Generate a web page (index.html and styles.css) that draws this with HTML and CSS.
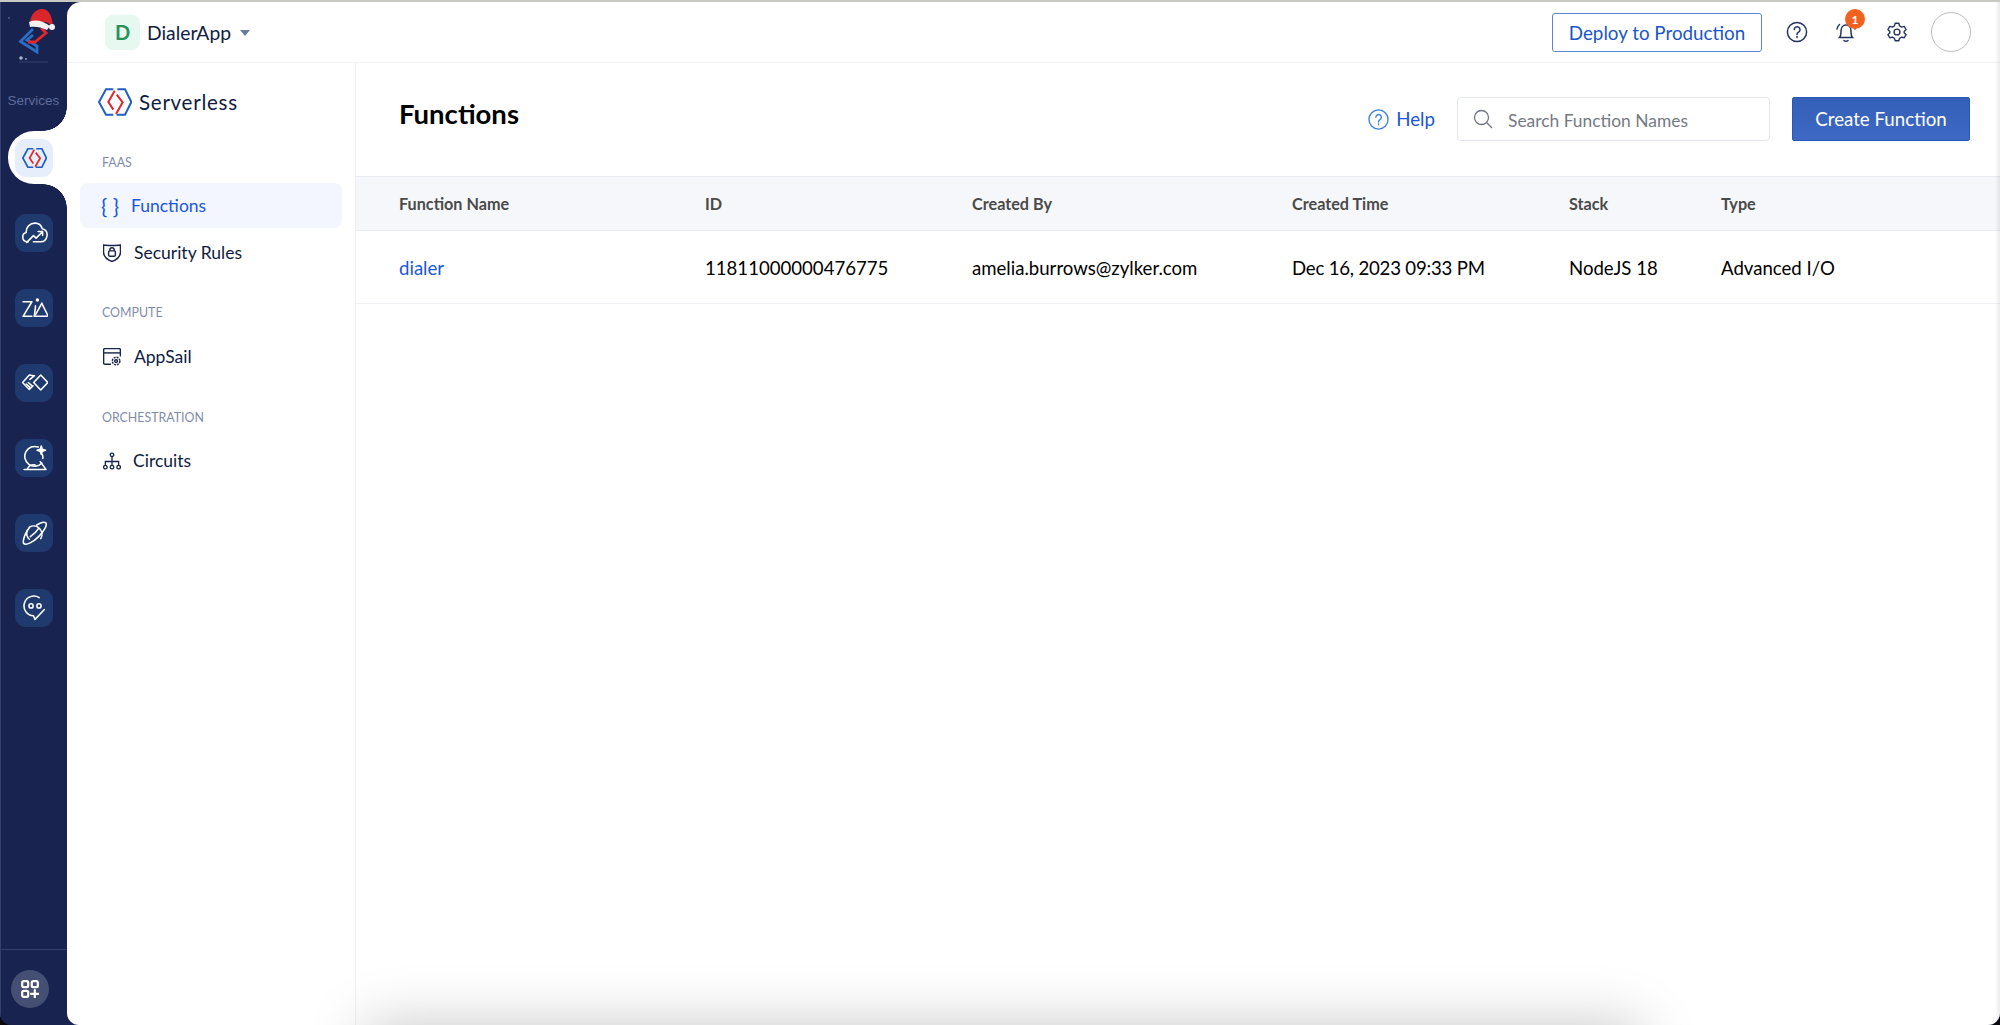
FILE: index.html
```html
<!DOCTYPE html>
<html lang="en">
<head>
<meta charset="utf-8">
<title>Functions - Serverless</title>
<link rel="stylesheet" href="styles.css">
</head>
<body>
<div class="shell">
  <nav class="rail">
    <svg class="rail-logo" viewBox="0 0 67 68" aria-hidden="true">
      <circle cx="9" cy="16" r=".7" fill="#8f9ac0"/>
      <path d="M33 27 L20.500 39.500 L37 50 V44 L27 38 L33 33" fill="none" stroke="#2a6fc4" stroke-width="2.800"/>
      <path d="M41 26 L46 31 L35 40 H28" fill="none" stroke="#e8262a" stroke-width="2.800"/>
      <path d="M30 20 C31 12 36 7 42 7 C49 7 52 14 53 24 L46 20 L31 22 Z" fill="#d9262b"/>
      <path d="M29 20 C36 17 43 19 50 24 L47 28 C41 25 35 24 30 25 Z" fill="#f4f1ee"/>
      <circle cx="52" cy="25" r="3" fill="#f4f1ee"/>
      <circle cx="21" cy="56" r="1.800" fill="#aab3cf"/>
      <circle cx="26" cy="57" r="1" fill="#8f9ac0"/>
      <path d="M19 60 H48" stroke="#34406c"/>
    </svg>
    <div class="rail-label">Services</div>
    <div class="rail-tab">
      <span class="tile tile-active">
        <svg class="ic-tile" viewBox="0 0 102 82" aria-hidden="true">
          <path d="M46 3 H24 L3 41 L24 79 H46 M58 3 H81 L100 41 81 79 H56" fill="none" stroke="#1f5fc0" stroke-width="7"/>
          <path d="M50 7 L31 41 L46 64 M56 19 L74 42 L54 77" fill="none" stroke="#e3262c" stroke-width="7"/>
        </svg>
      </span>
    </div>
    <div class="rail-list">
      <span class="tile"><svg class="ic-white" viewBox="0 0 26 26" aria-hidden="true"><path d="M7 21 H6 A4.600 4.600 0 0 1 5 12 C4.600 7 8.500 3 13.500 3 C17 3 19.500 5 20.500 8.500 C24 9.500 25.500 12.500 25 15.500 C24.500 18.500 22.500 21 19 21 H12"/><path d="M5.500 21.500 L12 15 L14.500 17.500 L20.500 11.500 M16.500 11 H20.800 V15"/></svg></span>
      <span class="tile"><svg class="ic-white" viewBox="0 0 26 26" aria-hidden="true"><path d="M2 6.500 H10.500 L2 20.500 H10.500"/><path d="M14 10.500 L12.800 20.500"/><circle cx="15.800" cy="4.800" r=".9"/><path d="M20 8 L25.500 19 C25.800 20 25.300 20.500 24.300 20.500 H13"/><path d="M20 8 L14 19"/></svg></span>
      <span class="tile"><svg class="ic-white" viewBox="0 0 26 26" aria-hidden="true"><path d="M19 4.800 L25.800 12 L19 19.200 L12.200 12 Z"/><path d="M12 5.500 L8 4.800 L1.500 12 L8 18.800 L11.500 15.300 M8.500 9 L13 5.500"/><path d="M5 13.500 L9 17 M7 12 L11 15.500"/></svg></span>
      <span class="tile"><svg class="ic-white" viewBox="0 0 26 26" aria-hidden="true"><path d="M16.500 2 A9.500 9.500 0 1 0 20 17.500 M20.500 9 A8.500 8.500 0 0 1 21 13"/><path d="M3 23.500 H24 L18.500 16 M6 23.500 C7 20.500 10 18.800 13.500 19"/><path d="M19.500 1 L20.500 4 L23.500 5 L20.500 6 L19.500 9 L18.500 6 L15.500 5 L18.500 4 Z" fill="#fff"/></svg></span>
      <span class="tile"><svg class="ic-white" viewBox="0 0 26 26" aria-hidden="true"><path d="M8 7 A8 8 0 0 1 19 18 M6 10 A8 8 0 0 0 8 18.500"/><path d="M8 7.500 C3.500 13 1.500 20 2.500 22.500 C5 25 12 21 17 16 C22 11 25.500 5 24 2.800 C22 1.500 18 3 15 5"/><path d="M9 16 C12 14 15 11 17 8"/></svg></span>
      <span class="tile"><svg class="ic-white" viewBox="0 0 26 26" aria-hidden="true"><path d="M17.500 2.500 A9.500 9.500 0 1 0 12 20 L13.500 23.500 L22.500 14"/><circle cx="9.700" cy="10.500" r="2"/><circle cx="17.300" cy="10.500" r="2"/></svg></span>
    </div>
    <div class="rail-foot">
      <span class="rail-add">
        <svg viewBox="0 0 18 18" aria-hidden="true"><rect x="1.200" y="1.200" width="6" height="6" rx="1.400"/><rect x="10.800" y="1.200" width="6" height="6" rx="1.400"/><rect x="1.200" y="10.800" width="6" height="6" rx="1.400"/><path d="M13.800 10 V17.600 M10 13.800 H17.600"/></svg>
      </span>
    </div>
  </nav>

  <div class="main">
    <header class="topbar">
      <span class="app-badge">D</span>
      <span class="app-name">DialerApp</span>
      <span class="caret"></span>
      <div class="topbar-right">
        <span class="btn-deploy">Deploy to Production</span>
        <svg class="ic-top ic-help" viewBox="0 0 22 22" aria-hidden="true"><circle cx="11" cy="11" r="9.600"/><path d="M8.200 8.600 A2.900 2.900 0 1 1 12.600 11.200 C11.600 11.800 11 12.400 11 13.600"/><path d="M11 15.600 V16.600"/></svg>
        <span class="bell">
          <svg class="ic-top" viewBox="0 0 22 24" aria-hidden="true"><path d="M4.500 17.500 C6 16 6 14 6 11 C6 7.500 8 5 11 5 C14 5 16 7.500 16 11 C16 14 16 16 17.500 17.500 Z"/><path d="M9 20.500 C10 21.500 12 21.500 13 20.500"/><path d="M2 9 C2.300 7 3.200 5.500 4.500 4.500 M20 9 C19.700 7 18.800 5.500 17.500 4.500"/></svg>
          <span class="badge">1</span>
        </span>
        <svg class="ic-top ic-gear" viewBox="0 0 24 24" aria-hidden="true"><path d="M10 2.500 H14 L14.800 5.300 L17 6.600 L19.900 5.900 L21.900 9.300 L19.800 11.400 V12.800 L21.900 14.900 L19.900 18.300 L17 17.600 L14.800 18.900 L14 21.500 H10 L9.200 18.900 L7 17.600 L4.100 18.300 L2.100 14.900 L4.200 12.800 V11.400 L2.100 9.300 L4.100 5.900 L7 6.600 L9.200 5.300 Z" stroke-linejoin="round"/><circle cx="12" cy="12" r="3.200"/></svg>
        <span class="avatar"></span>
      </div>
    </header>

    <div class="body">
      <aside class="sidebar">
        <div class="brand">
          <svg class="brand-logo" viewBox="0 0 102 82" aria-hidden="true">
            <path d="M46 3 H24 L3 41 L24 79 H46 M58 3 H81 L100 41 81 79 H56" fill="none" stroke="#1f5fc0" stroke-width="6"/>
            <path d="M50 7 L31 41 L46 64 M56 19 L74 42 L54 77" fill="none" stroke="#e3262c" stroke-width="6"/>
          </svg>
          <span class="brand-name">Serverless</span>
        </div>
        <div class="section-label label-faas">FAAS</div>
        <a class="nav-item is-active"><span class="braces">{ }</span><span>Functions</span></a>
        <a class="nav-item nav-security">
          <svg class="ic-nav" viewBox="1.500 2 17 17" aria-hidden="true"><path d="M2 3 C5 3.600 15 3.600 18 3 V9.500 C18 14 14 17 10 18.500 C6 17 2 14 2 9.500 Z"/><rect x="6.800" y="8.500" width="6.400" height="5" rx="1"/><path d="M8 8.500 V7.500 A2 2 0 0 1 12 7.500 V8.500"/></svg>
          <span>Security Rules</span>
        </a>
        <div class="section-label label-compute">COMPUTE</div>
        <a class="nav-item nav-compute">
          <svg class="ic-nav" viewBox="1.200 1.700 17.600 17.600" aria-hidden="true"><path d="M9 17.500 H3 A1.200 1.200 0 0 1 1.800 16.300 V3.500 A1.200 1.200 0 0 1 3 2.300 H17 A1.200 1.200 0 0 1 18.200 3.500 V10"/><path d="M1.800 6.500 H18.200"/><circle cx="14" cy="14.500" r="1.400"/><circle cx="14" cy="14.500" r="3.700" stroke-dasharray="2 .9"/></svg>
          <span>AppSail</span>
        </a>
        <div class="section-label label-orch">ORCHESTRATION</div>
        <a class="nav-item nav-circuits">
          <svg class="ic-nav" viewBox="0.500 1 19 18" aria-hidden="true"><circle cx="10" cy="3.500" r="1.900"/><circle cx="3" cy="16.500" r="1.900"/><circle cx="10" cy="16.500" r="1.900"/><circle cx="17" cy="16.500" r="1.900"/><path d="M10 5.400 V14.600 M3 14.600 V10.500 H17 V14.600"/></svg>
          <span>Circuits</span>
        </a>
      </aside>

      <section class="content">
        <div class="content-head">
          <h1 class="title">Functions</h1>
          <div class="actions">
            <a class="help">
              <svg viewBox="0 0 22 22" aria-hidden="true"><circle cx="11" cy="11" r="10"/><path d="M8.200 8.600 A2.900 2.900 0 1 1 12.600 11.200 C11.600 11.800 11 12.400 11 13.600"/><path d="M11 15.600 V16.600"/></svg>
              <span>Help</span>
            </a>
            <div class="search">
              <svg viewBox="0 0 20 20" aria-hidden="true"><circle cx="8.500" cy="8.500" r="7"/><path d="M13.500 13.500 L19 19"/></svg>
              <span class="placeholder">Search Function Names</span>
            </div>
            <span class="btn-create">Create Function</span>
          </div>
        </div>
        <div class="table">
          <div class="row row-head">
            <span>Function Name</span><span>ID</span><span>Created By</span><span>Created Time</span><span>Stack</span><span>Type</span>
          </div>
          <div class="row row-data">
            <a class="link">dialer</a><span>11811000000476775</span><span>amelia.burrows@zylker.com</span><span class="cell-time">Dec 16, 2023 09:33 PM</span><span>NodeJS 18</span><span>Advanced I/O</span>
          </div>
        </div>
        <div class="bottom-shadow"></div>
      </section>
    </div>
  </div>
</div>
</body>
</html>
```

FILE: styles.css
```css
* { box-sizing: border-box; }
html, body { margin: 0; height: 100%; background: #0b0b0f; overflow: hidden; }
body { font-family: Lato, "Open Sans", sans-serif; color: #0f1c3f; }
a { text-decoration: none; color: inherit; }

.shell {
  height: 1025px;
  display: flex;
  border-top: 2px solid #c9c9c4;
  border-radius: 0 0 12px 12px;
  overflow: hidden;
  background: #18244f;
  position: relative;
}
.shell::after {
  content: "";
  position: absolute;
  top: 0; right: 0; bottom: 0;
  width: 5px;
  background: linear-gradient(to right, rgba(0,0,0,0), rgba(0,0,0,.08));
}

/* Rail */
.rail {
  width: 67px;
  flex: none;
  display: flex;
  flex-direction: column;
  background: #18244f;
  border-left: 1px solid #333f6d;
}
.rail-logo { width: 67px; height: 68px; margin-left: -1px; display: block; }
.rail-label {
  font-family: "Liberation Sans", Arial, sans-serif;
  font-size: 13.500px;
  line-height: 18px;
  color: #5d6b9d;
  text-align: center;
  margin-top: 22px;
  margin-left: -1px;
}
.rail-tab {
  margin-top: 21px;
  margin-left: 7px;
  height: 53px;
  background: #fff;
  border-radius: 26px 0 0 26px;
  display: flex;
  align-items: center;
  padding-left: 7px;
  position: relative;
}
.rail-tab::before, .rail-tab::after {
  content: "";
  position: absolute;
  right: 0;
  width: 24px;
  height: 24px;
}
.rail-tab::before { top: -24px; background: radial-gradient(circle at 0 0, #18244f 23.500px, #fff 24px); }
.rail-tab::after { bottom: -24px; background: radial-gradient(circle at 0 100%, #18244f 23.500px, #fff 24px); }
.tile {
  width: 38px;
  height: 38px;
  border-radius: 11px;
  background: #1f3a6e;
  display: flex;
  align-items: center;
  justify-content: center;
  flex: none;
}
.tile-active { background: #e6edfb; }
.ic-tile { width: 25px; height: 20px; }
.ic-white { width: 27px; height: 27px; fill: none; stroke: #fff; stroke-width: 1.500; stroke-linecap: round; stroke-linejoin: round; }
.rail-list {
  margin-top: 30px;
  margin-left: 14px;
  display: flex;
  flex-direction: column;
  gap: 37px;
}
.rail-foot {
  margin-top: auto;
  height: 76px;
  margin-left: -1px;
  border-top: 1px solid #333f6d;
  display: flex;
  align-items: flex-start;
  padding: 20px 0 0 11px;
}
.rail-add {
  width: 38px;
  height: 38px;
  border-radius: 50%;
  background: #454f73;
  display: flex;
  align-items: center;
  justify-content: center;
}
.rail-add svg { width: 18px; height: 18px; fill: none; stroke: #fff; stroke-width: 2.200; stroke-linecap: round; }

/* Main */
.main {
  flex: 1;
  min-width: 0;
  background: #fff;
  border-radius: 14px 0 0 12px;
  display: flex;
  flex-direction: column;
  overflow: hidden;
}
.topbar {
  height: 61px;
  flex: none;
  display: flex;
  align-items: center;
  padding: 0 29px 0 38px;
  border-bottom: 1px solid #f1f2f7;
}
.app-badge {
  width: 35px;
  height: 35px;
  border-radius: 8px;
  background: #e6f8ef;
  color: #2a9258;
  font-weight: 700;
  font-size: 20px;
  display: flex;
  align-items: center;
  justify-content: center;
}
.app-name { font-size: 19.300px; margin-left: 7px; color: #0f1c3f; }
.caret {
  width: 0; height: 0;
  margin-left: 9px;
  margin-top: 1px;
  border-left: 5.500px solid transparent;
  border-right: 5.500px solid transparent;
  border-top: 6.500px solid #6c7a9c;
}
.topbar-right { margin-left: auto; display: flex; align-items: center; }
.btn-deploy {
  width: 210px;
  height: 39px;
  border: 1px solid #5b85d9;
  border-radius: 3px;
  color: #1a56c8;
  font-size: 18.800px;
  display: flex;
  align-items: center;
  justify-content: center;
}
.ic-top { width: 22px; height: 22px; fill: none; stroke: #23345f; stroke-width: 1.500; stroke-linecap: round; display: block; }
.ic-help { margin-left: 24px; }
.bell { position: relative; margin-left: 27px; display: block; }
.bell .ic-top { height: 24px; }
.badge {
  position: absolute;
  top: -11px;
  left: 10px;
  width: 20px;
  height: 20px;
  border-radius: 50%;
  background: #f2621f;
  color: #fff;
  font-size: 12px;
  font-weight: 700;
  display: flex;
  align-items: center;
  justify-content: center;
}
.ic-gear { margin-left: 29px; }
.avatar {
  width: 40px;
  height: 40px;
  border-radius: 50%;
  border: 1px solid #bdbdbd;
  margin-left: 23px;
}

.body { flex: 1; display: flex; min-height: 0; }
.sidebar {
  width: 289px;
  flex: none;
  border-right: 1px solid #eff0f4;
  display: flex;
  flex-direction: column;
  padding-left: 13px;
  padding-right: 13px;
}
.brand { display: flex; align-items: center; height: 28px; margin-top: 25px; padding-left: 18px; }
.brand-logo { width: 34px; height: 28px; flex: none; }
.brand-name { margin-left: 7px; font-size: 20.600px; letter-spacing: .7px; color: #0f1c3f; }
.section-label { font-size: 12.400px; line-height: 16px; color: #7f8caa; padding-left: 22px; }
.label-faas { margin-top: 39px; }
.label-compute { margin-top: 30px; }
.label-orch { margin-top: 31px; }
.nav-item {
  height: 45px;
  border-radius: 8px;
  display: flex;
  align-items: center;
  font-size: 17.500px;
  color: #0f1c3f;
  padding-left: 23px;
}
.label-faas + .nav-item { margin-top: 12px; }
.nav-security { margin-top: 2px; }
.nav-compute { margin-top: 13px; }
.nav-circuits { margin-top: 12px; }
.nav-item.is-active { background: #f3f6fe; color: #1a56db; padding-left: 21px; }
.braces { width: 30px; font-size: 21px; color: #1a56db; white-space: pre; }
.ic-nav { width: 18px; height: 18px; fill: none; stroke: #18264d; stroke-width: 1.400; margin-right: 13px; flex: none; }
.nav-circuits .ic-nav { margin-right: 12px; }

/* Content */
.content { flex: 1; min-width: 0; display: flex; flex-direction: column; position: relative; }
.content-head {
  height: 113px;
  flex: none;
  display: flex;
  align-items: flex-start;
  justify-content: space-between;
  padding: 34px 30px 0 43px;
}
.title { margin: 0; font-size: 27.500px; line-height: 34px; font-weight: 700; color: #000; }
.actions { display: flex; align-items: center; }
.help { display: flex; align-items: center; color: #1a56db; font-size: 18.700px; }
.help svg { width: 21px; height: 21px; fill: none; stroke: #3b7ddd; stroke-width: 1.400; stroke-linecap: round; margin-right: 7px; }
.search {
  width: 313px;
  height: 44px;
  margin-left: 22px;
  border: 1px solid #e3e6ef;
  border-radius: 4px;
  display: flex;
  align-items: center;
  padding-left: 15px;
  font-size: 17.400px;
  color: #757a84;
}
.search svg { width: 20px; height: 20px; fill: none; stroke: #6e7480; stroke-width: 1.300; margin-right: 15px; }
.placeholder { padding-top: 2px; }
.btn-create {
  width: 178px;
  height: 44px;
  margin-left: 22px;
  background: linear-gradient(#3560b8, #3d68c4);
  border: 1px solid #2a57b5;
  border-radius: 2px;
  color: #fff;
  font-size: 18.700px;
  display: flex;
  align-items: center;
  justify-content: center;
}
.row {
  display: grid;
  grid-template-columns: 306px 267px 320px 277px 152px 1fr;
  padding-left: 43px;
  align-items: center;
}
.row-head {
  height: 55px;
  background: #f6f7fa;
  border-top: 1px solid #e8ebf2;
  border-bottom: 1px solid #e8ebf2;
  font-size: 16.200px;
  font-weight: 700;
  color: #4a4a4a;
}
.row-data {
  height: 73px;
  padding-top: 1px;
  border-bottom: 1px solid #eef0f4;
  font-size: 18.600px;
  color: #000;
}
.cell-time { letter-spacing: -.2px; }
.link { color: #1a56db; }
.bottom-shadow {
  position: absolute;
  left: 9px;
  right: 360px;
  bottom: -200px;
  height: 200px;
  box-shadow: 0 0 55px rgba(0,0,0,.22);
}
```
